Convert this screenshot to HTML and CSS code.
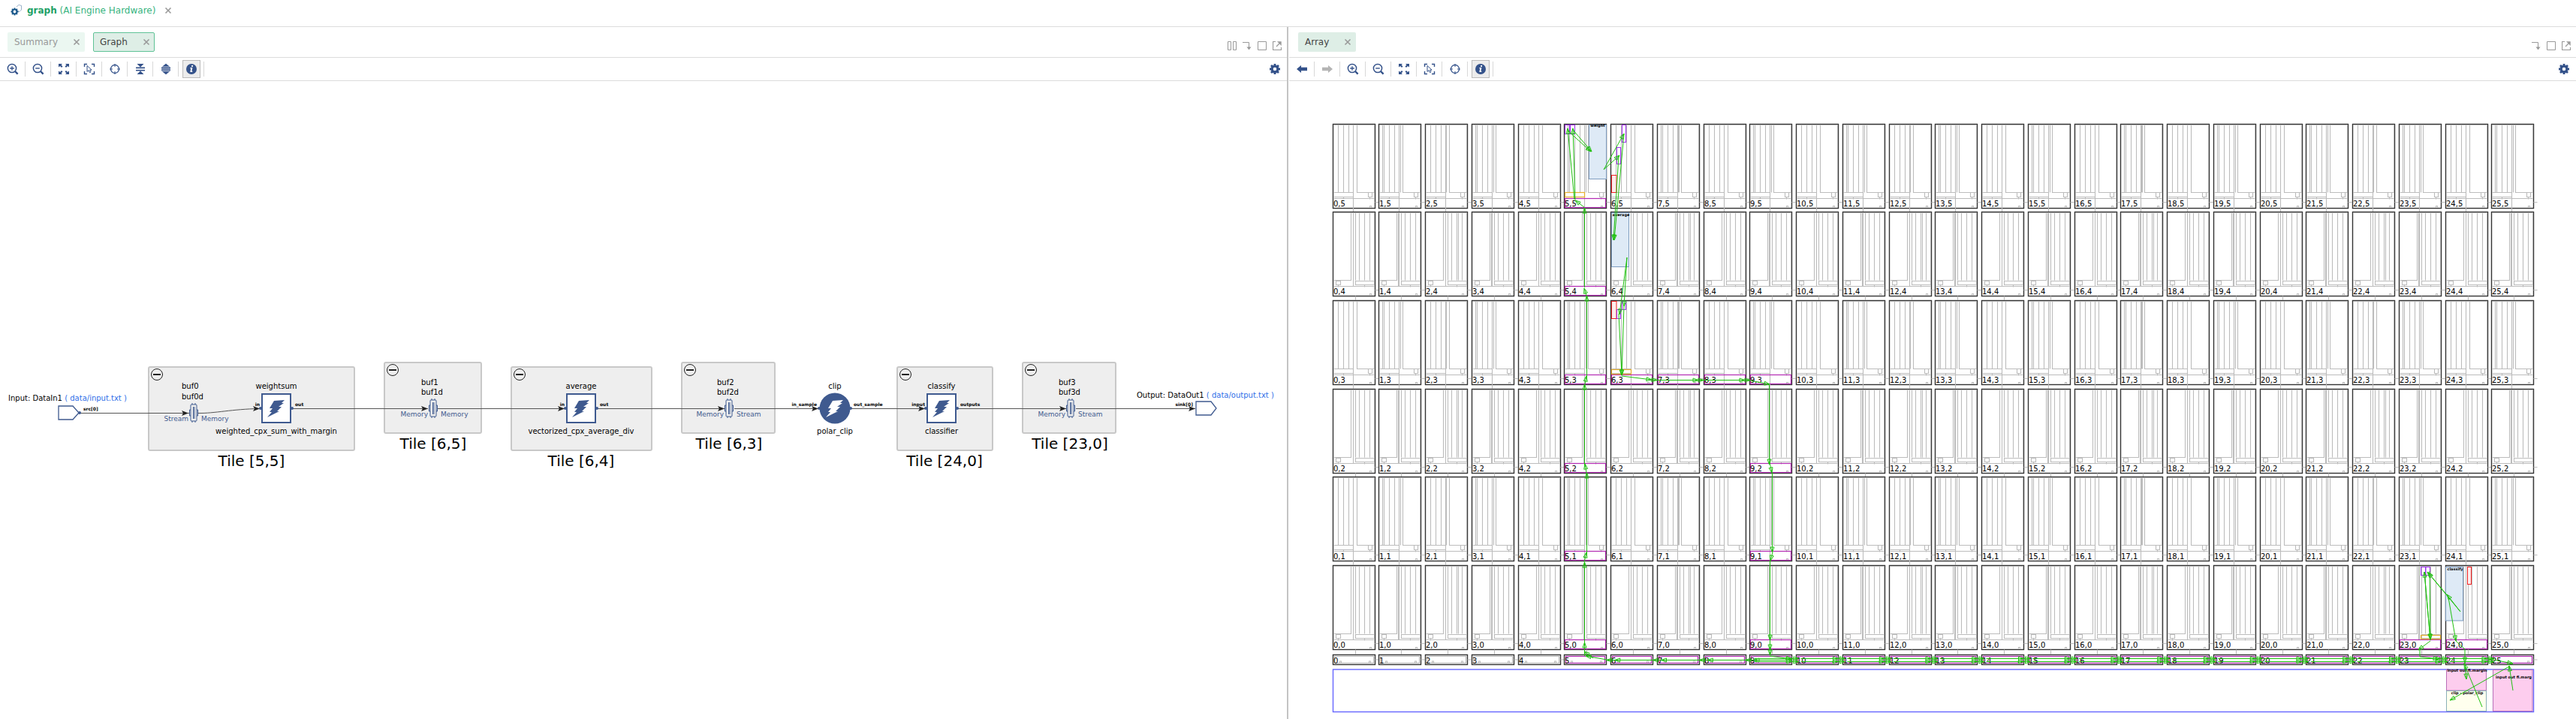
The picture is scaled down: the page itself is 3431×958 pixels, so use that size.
FILE: index.html
```html
<!DOCTYPE html>
<html lang="en">
<head>
<meta charset="utf-8">
<title>graph (AI Engine Hardware)</title>
<link rel="stylesheet" href="styles.css">
</head>
<body>
<svg class="sprite" aria-hidden="true">
  <symbol id="zoom-in" viewBox="0 0 16 16"><circle cx="7" cy="7" r="5.6" fill="none" stroke="currentColor" stroke-width="1.5"/><path d="M4.2 7h5.6M7 4.2v5.6" stroke="currentColor" stroke-width="1.3"/><path d="M11 11l3.6 3.6" stroke="currentColor" stroke-width="2.4"/></symbol>
  <symbol id="zoom-out" viewBox="0 0 16 16"><circle cx="7" cy="7" r="5.6" fill="none" stroke="currentColor" stroke-width="1.5"/><path d="M4.2 7h5.6" stroke="currentColor" stroke-width="1.4"/><path d="M11 11l3.6 3.6" stroke="currentColor" stroke-width="2.4"/></symbol>
  <symbol id="fit" viewBox="0 0 16 16"><path fill="currentColor" d="M1 1h5L4.500 2.500 6.500 4.500 5 6 3 4 1 5.500zM15 1h-5l1.500 1.500-2 2L11 6l2-2 2 1.500zM1 15h5l-1.500-1.500 2-2L5 10l-2 2-2-1.500zM15 15h-5l1.500-1.500-2-2L11 10l2 2 2-1.500z"/></symbol>
  <symbol id="fit-sel" viewBox="0 0 16 16"><g fill="none" stroke="currentColor"><path stroke-width="1.4" d="M1.500 5V1.500H5M11 1.500h3.500V5M14.500 11v3.500H11M5 14.500H1.500V11"/><path d="M5 3.500v8l2-1.800 1.500 3 1.500-.8-1.400-2.700h2.500z"/></g></symbol>
  <symbol id="target" viewBox="0 0 16 16"><circle cx="8" cy="8" r="5.500" fill="none" stroke="currentColor" stroke-width="1.300"/><path d="M8 1v4M8 11v4M1 8h4M11 8h4" stroke="currentColor"/></symbol>
  <symbol id="collapse" viewBox="0 0 16 16"><path fill="currentColor" d="M3.500 1h9L8 5.500zM3.500 15h9L8 10.500zM2 5.600h12v1.600H2zM2 8.900h12v1.600H2z"/></symbol>
  <symbol id="expand" viewBox="0 0 16 16"><path fill="currentColor" d="M3 4.700h10L8 .8zM3 11.300h10L8 15.200zM2 5.600h12v1.300H2zM2 7.500h12v1.200H2zM2 9.300h12v1.200H2z"/></symbol>
  <symbol id="info" viewBox="0 0 16 16"><circle cx="8" cy="8" r="7" fill="currentColor"/><path d="M8.300 3h1.900l-.4 1.900H7.900zM6.500 6h2.900l-1 4.800h1L9.200 12H6.300l.9-4.800h-.9z" fill="#fff"/></symbol>
  <symbol id="back" viewBox="0 0 16 16"><path fill="currentColor" d="M1 8l6-5v2.800h8v4.400H7V13z"/></symbol>
  <symbol id="forward" viewBox="0 0 16 16"><path fill="currentColor" d="M15 8L9 3v2.800H1v4.400h8V13z"/></symbol>
  <symbol id="gear" viewBox="0 0 16 16"><circle cx="8" cy="8" r="3.900" fill="none" stroke="currentColor" stroke-width="3.200"/><path d="M8 1v2.500M8 12.500V15M1 8h2.500M12.500 8H15M3 3l2 2M11 11l2 2M13 3l-2 2M5 11l-2 2" stroke="currentColor" stroke-width="2.800"/></symbol>
  <symbol id="split" viewBox="0 0 12 12"><path d="M.5.500h4v11h-4zM7.500.500h4v11h-4z" fill="none" stroke="currentColor"/></symbol>
  <symbol id="dock" viewBox="0 0 12 12"><path d="M0 1.500h8.500V8" fill="none" stroke="currentColor"/><path d="M5.500 7.500h6l-3 4z" fill="currentColor"/></symbol>
  <symbol id="square" viewBox="0 0 12 12"><path d="M.5.500h11v11H.5z" fill="none" stroke="currentColor"/></symbol>
  <symbol id="popout" viewBox="0 0 12 12"><path d="M4 .5H.5v11h11V8M5 7l4-4" fill="none" stroke="currentColor" stroke-width="1.200"/><path d="M6 .3h5.700V6z" fill="currentColor"/></symbol>
  <symbol id="close" viewBox="0 0 10 10"><path d="M1.500 1.500l7 7M8.500 1.500l-7 7" stroke="currentColor" stroke-width="1.600"/></symbol>
</svg>

<header class="titlebar">
  <svg class="app-icon" viewBox="0 0 16 16"><path d="M8 3l3-2.500 3.500 1V7L12 9.500 9 8.500" fill="#fff" stroke="#7f9dbb" stroke-width=".8"/><circle cx="5.500" cy="9.500" r="3" fill="none" stroke="#1d5a8c" stroke-width="2.200"/><path d="M5.500 4.500v2M5.500 12.500v2M.5 9.500h2M8.500 9.500h2M2 6l1.500 1.500M7.500 11.500L9 13M9 6L7.500 7.500M3.500 11.500L2 13" stroke="#1d5a8c" stroke-width="1.800"/></svg>
  <h1 class="title"><b>graph</b> (AI Engine Hardware)</h1>
  <button class="close" aria-label="Close graph"><svg><use href="#close"/></svg></button>
</header>

<main class="split">
  <section class="pane">
    <div class="tabbar">
      <div class="tab tab-idle"><button class="tab-name">Summary</button><button class="close" aria-label="Close Summary"><svg><use href="#close"/></svg></button></div>
      <div class="tab tab-active"><button class="tab-name">Graph</button><button class="close" aria-label="Close Graph"><svg><use href="#close"/></svg></button></div>
      <div class="window-tools">
        <button aria-label="Split"><svg><use href="#split"/></svg></button>
        <button aria-label="Dock"><svg><use href="#dock"/></svg></button>
        <button aria-label="Maximize"><svg><use href="#square"/></svg></button>
        <button aria-label="Float"><svg><use href="#popout"/></svg></button>
      </div>
    </div>
    <div class="toolbar">
      <button class="tool" aria-label="Zoom in"><svg><use href="#zoom-in"/></svg></button>
      <button class="tool" aria-label="Zoom out"><svg><use href="#zoom-out"/></svg></button>
      <button class="tool" aria-label="Zoom fit"><svg><use href="#fit"/></svg></button>
      <button class="tool" aria-label="Fit selection"><svg><use href="#fit-sel"/></svg></button>
      <button class="tool" aria-label="Autofit"><svg><use href="#target"/></svg></button>
      <button class="tool" aria-label="Collapse all"><svg><use href="#collapse"/></svg></button>
      <button class="tool" aria-label="Expand all"><svg><use href="#expand"/></svg></button>
      <button class="tool tool-on" aria-label="Information"><svg><use href="#info"/></svg></button>
      <button class="settings" aria-label="Settings"><svg><use href="#gear"/></svg></button>
    </div>
    <div class="canvas"><svg id="graph" viewBox="0 108 1714 850" preserveAspectRatio="xMinYMin"></svg></div>
  </section>
  <div class="divider"></div>
  <section class="pane">
    <div class="tabbar">
      <div class="tab tab-plain"><button class="tab-name">Array</button><button class="close" aria-label="Close Array"><svg><use href="#close"/></svg></button></div>
      <div class="window-tools">
        <button aria-label="Dock"><svg><use href="#dock"/></svg></button>
        <button aria-label="Maximize"><svg><use href="#square"/></svg></button>
        <button aria-label="Float"><svg><use href="#popout"/></svg></button>
      </div>
    </div>
    <div class="toolbar">
      <button class="tool" aria-label="Back"><svg><use href="#back"/></svg></button>
      <button class="tool" aria-label="Forward" disabled><svg><use href="#forward"/></svg></button>
      <button class="tool" aria-label="Zoom in"><svg><use href="#zoom-in"/></svg></button>
      <button class="tool" aria-label="Zoom out"><svg><use href="#zoom-out"/></svg></button>
      <button class="tool" aria-label="Zoom fit"><svg><use href="#fit"/></svg></button>
      <button class="tool" aria-label="Fit selection"><svg><use href="#fit-sel"/></svg></button>
      <button class="tool" aria-label="Autofit"><svg><use href="#target"/></svg></button>
      <button class="tool tool-on" aria-label="Information"><svg><use href="#info"/></svg></button>
      <button class="settings" aria-label="Settings"><svg><use href="#gear"/></svg></button>
    </div>
    <div class="canvas"><svg id="array" viewBox="1717 108 1714 850" preserveAspectRatio="xMinYMin"></svg></div>
  </section>
</main>
<script src="app.js"></script>
</body>
</html>
```

FILE: styles.css
```css
* { box-sizing: border-box; }
body {
  margin: 0;
  height: 100vh;
  display: flex;
  flex-direction: column;
  background: #fff;
  color: #444;
  font: 12px/16px "DejaVu Sans", sans-serif;
}
button {
  padding: 0;
  border: 0;
  background: none;
  color: inherit;
  font: inherit;
  display: flex;
  align-items: center;
  justify-content: center;
}
.sprite { position: absolute; width: 0; height: 0; }

.titlebar {
  height: 36px;
  padding: 0 14px 8px;
  display: flex;
  align-items: center;
  gap: 6px;
  border-bottom: 1px solid #dcdcdc;
}
.app-icon { width: 16px; height: 16px; }
.title { margin: 0; font-size: 12px; font-weight: 400; color: #36b37e; }
.title b { color: #22a066; }
.close { color: #999; }
.close svg { width: 10px; height: 10px; }
.titlebar .close { margin-left: 6px; }

.split { flex: 1; min-height: 0; display: grid; grid-template-columns: 1fr 3px 1fr; }
.pane { min-width: 0; min-height: 0; display: flex; flex-direction: column; }
.divider { border-left: 2px solid #c4c4c4; }

.tabbar {
  height: 41px;
  padding: 0 7px 0 10px;
  display: flex;
  align-items: center;
  gap: 11px;
  border-bottom: 1px solid #dcdcdc;
}
.tab {
  height: 26px;
  padding: 0 6px 0 9px;
  display: flex;
  align-items: center;
  justify-content: space-between;
  gap: 20px;
  border-radius: 2px;
}
.tab-idle { background: #ebf7f1; color: #999; }
.tab-active { background: #deeee6; border: 1px solid #5fc296; padding: 0 5px 0 8px; }
.tab-plain { background: #deeee6; margin-left: 2px; }
.window-tools {
  margin-left: auto;
  padding-top: 10px;
  display: flex;
  gap: 8px;
  color: #999;
}
.window-tools svg { width: 12px; height: 12px; }

.toolbar {
  height: 31px;
  padding: 0 8px 0 0;
  display: flex;
  align-items: center;
  border-bottom: 1px solid #dcdcdc;
}
.tool {
  width: 34px;
  height: 20px;
  border-right: 1px solid #d8d8d8;
  color: #34528a;
}
.tool:disabled { color: #b4b4b4; }
.tool svg, .settings svg { width: 16px; height: 16px; }
.tool-on svg {
  width: 24px;
  height: 24px;
  padding: 3px;
  border: 1px solid #bbb;
  background: #ececec;
}
.settings { margin-left: auto; color: #34528a; }

.canvas { flex: 1; min-height: 0; }
.canvas svg { display: block; width: 100%; height: 100%; }
.canvas text { font-family: "DejaVu Sans", sans-serif; font-size: 10px; fill: #000; }
.canvas .tile-name { font-size: 20px; }
.canvas .side { font-size: 9px; fill: #3f5a8f; }
.canvas .pin { font-size: 6px; font-weight: 700; }
.canvas .tag { font-size: 5px; font-weight: 700; }
.canvas .file { fill: #2f6fe8; }
.mid { text-anchor: middle; }
.end { text-anchor: end; }

.group { fill: #eee; stroke: #c8c8c8; stroke-width: 2; }
.minus { fill: none; stroke: #222; stroke-width: 1; }
.bar { stroke: #222; stroke-width: 2; }
.wire { fill: none; stroke: #555; stroke-width: 1; }
.head { fill: #222; }
.outline { fill: #fff; stroke: #3f5a8f; stroke-width: 2; }
.thin { fill: none; stroke: #3f5a8f; stroke-width: 1; }
.port { fill: #fff; stroke: #3f5a8f; stroke-width: 1.3; }
.solid { fill: #3f5a8f; }
.white { fill: #fff; }

.cell { fill: #fff; stroke: #333; stroke-width: 1.4; }
.detail { fill: none; stroke: #bcbcbc; stroke-width: 1.1; }
.used { fill: none; stroke: #b32ab3; stroke-width: 1.2; }
.buffer { fill: none; stroke: #a030f0; stroke-width: 1; }
.kernel { fill: #deeaf6; stroke: #7f9dc0; stroke-width: 1; }
.stack { fill: #ffecec; stroke: #f02020; stroke-width: 1; }
.dma { fill: none; stroke: #e8b030; stroke-width: 1.2; }
.fabric { fill: none; stroke: #6666ff; stroke-width: 1.4; }
.io { fill: #fdcdee; stroke: #b870b8; stroke-width: 1; }
.pl { fill: #ffffee; stroke: #8ab0b8; stroke-width: 1; }
.net { fill: none; stroke: #20c010; stroke-width: 1; }
```

FILE: app.js
```js
const rect = (c, x1, y1, x2, y2, r = 0) =>
  `<rect class="${c}" x="${x1}" y="${y1}" width="${x2 - x1}" height="${y2 - y1}" rx="${r}"/>`;
const text = (c, x, y, s) => `<text class="${c}" x="${x}" y="${y}">${s}</text>`;
const path = (c, d) => `<path class="${c}" d="${d}"/>`;

/* ---------- dataflow graph ---------- */
const Y = 544;
const bolt = (c, x, y) =>
  path(c, `M${x + 11} ${y - 11}L${x - 3} ${y - 10}L${x - 9} ${y}L${x - 5} ${y}L${x - 9} ${y + 5}L${x - 6} ${y + 5}L${x - 12} ${y + 12}L${x + 4} ${y + 4}L${x + 1} ${y + 4}L${x + 7} ${y - 2}L${x + 3} ${y - 2}L${x + 10} ${y - 7}L${x + 7} ${y - 7}Z`);
const head = (x, y) => path("head", `M${x} ${y}l-9 -3.500l2 3.500l-2 3.500z`);
const group = (x1, x2, tall, name, cx) => {
  const top = tall ? 489 : 483, bottom = tall ? 600 : 577;
  return rect("group", x1, top, x2, bottom, 2) +
    `<circle class="minus" cx="${x1 + 11}" cy="${top + 10}" r="7.500"/>` +
    path("bar", `M${x1 + 6} ${top + 10}h10`) +
    text("tile-name mid", cx, bottom + 21, name);
};
const buffer = (x, y, n, left, right, gap) =>
  text("", x - 16, y - 18 - gap, "buf" + n) + text("", x - 16, y - 18, `buf${n}d`) +
  `<rect class="thin" x="${x - 4}" y="${y - 11}" width="8" height="22" rx="1"/>` +
  path("thin", `M${x - .5} ${y - 8}v16M${x + 1} ${y - 8}v16M${x - 2} ${y - 11}v-2M${x + 2} ${y - 11}v-2M${x - 2} ${y + 11}v2M${x + 2} ${y + 11}v2M${x - 4} ${y - 4}h-1.500v8h1.500M${x + 4} ${y - 4}h1.500v8h-1.500`) +
  text("side end", x - 7, y + 11, left) + text("side", x + 10, y + 11, right);
const pins = x => `<circle class="solid" cx="${x - 21}" cy="${Y}" r="2"/><circle class="solid" cx="${x + 21}" cy="${Y}" r="2"/>`;
const kernel = (x, name, fn, pin1, pin2) =>
  rect("outline", x - 19, Y - 19, x + 19, Y + 19) + bolt("solid", x, Y) + pins(x) +
  text("mid", x, 518, name) + text("mid", x, 578, fn) +
  text("pin end", x - 22, 541, pin1) + text("pin", x + 25, 541, pin2);

let g = "";
g += group(198, 472, true, "Tile [5,5]", 335) + group(512, 641, false, "Tile [6,5]", 577) +
  group(681, 868, true, "Tile [6,4]", 774) + group(908, 1032, false, "Tile [6,3]", 971) +
  group(1195, 1322, true, "Tile [24,0]", 1258) + group(1362, 1486, false, "Tile [23,0]", 1425);
g += path("wire", `M106 550.5H252M264 550.5C285 551 310 545 345 544.5M388 544.5H570M583 544.5H752M795 544.5H965M978 544.5H1090M1133 544.5H1232M1275 544.5H1420M1433 544.5H1592`);
g += path("port", "M78 541h19l8 9l-8 9h-19z") + `<circle class="solid" cx="106" cy="550" r="2"/>`;
g += path("port", "M1593 535h20l7 9l-7 9h-20z");
g += `<text x="11" y="534">Input: DataIn1 <tspan class="file">( data/input.txt )</tspan></text>`;
g += `<text x="1514" y="530">Output: DataOut1 <tspan class="file">( data/output.txt )</tspan></text>`;
g += text("pin", 111, 547, "src[0]") + text("pin end", 1589, 541, "sink[0]");
g += buffer(258, 550, 0, "Stream", "Memory", 14) + buffer(577, Y, 1, "Memory", "Memory", 13) +
  buffer(971, Y, 2, "Memory", "Stream", 13) + buffer(1426, Y, 3, "Memory", "Stream", 13);
g += kernel(368, "weightsum", "weighted_cpx_sum_with_margin", "in", "out");
g += kernel(774, "average", "vectorized_cpx_average_div", "in", "out");
g += `<circle class="solid" cx="1112" cy="${Y}" r="20.500"/>` + bolt("white", 1112, Y) + pins(1112) +
  text("mid", 1112, 518, "clip") + text("mid", 1112, 578, "polar_clip") +
  text("pin end", 1088, 541, "in_sample") + text("pin", 1137, 541, "out_sample");
g += kernel(1254, "classify", "classifier", "input", "outputs");
g += head(251, 550.5) + [346, 570, 752, 965, 1090, 1232, 1420, 1592].map(x => head(x, 544.5)).join("");
document.getElementById("graph").innerHTML = g;

/* ---------- tile array ---------- */
const colX = c => 1775 + c * 61.75;
const rowY = r => 753.5 - r * 117.7;
const used = new Set(["5,5", "5,4", "5,3", "5,2", "5,1", "5,0", "6,3", "7,3", "8,3", "9,3", "9,2", "9,1", "9,0", "23,0", "24,0"]);
let a = "", labels = "";
for (let r = 5; r >= 0; r--) for (let c = 0; c < 26; c++) {
  const x = Math.floor(colX(c)) + .5, y = Math.floor(rowY(r)) + .5, odd = r % 2 === 1;
  a += rect("cell", x, y, x + 56, y + 112);
  let d = odd
    ? "M7 1v90M14 1v90M21 1v90M27 1v90M32 1v90h23v-90M1 91h26v6h-26M47 91h5v6h-5zM14 97v3M49 97v3"
    : "M24 1v90h-23M27 1v98M30 91v-90M35 1v90M42 1v90M49 1v90M55 1v90M30 92h25v5h-25zM4 92h6v5h-6zM7 97v3M42 97v3";
  if (c % 2) d += odd ? "M5 1v90M29 1v90" : "M26 1v98";
  if (c % 5 === 2) d += odd ? "M28 1v90" : "M44 1v90";
  d += "M1 1h54M1 99h54M49 111v-2h2v2M56 104h5";
  d += r ? (odd ? "M27 97v20" : "M30 112v5") : "M30 112v6";
  a += `<g transform="translate(${x} ${y})">${path("detail", d)}</g>`;
  if (used.has(`${c},${r}`)) a += rect("used", x + 1, y + 99, x + 55, y + 111);
  labels += text("", x + .5, y + 109.5, `${c},${r}`);
}
for (let c = 0; c < 26; c++) {
  const x = Math.floor(colX(c)) + .5;
  a += rect("cell", x, 872.5, x + 56, 885.5) + rect(c > 4 ? "used" : "detail", x + 2, 874.5, x + 54, 883.5) +
    path("detail", `M${x + 9} 883v-2h2v2M${x + 48} 883v-2h2v2M${x + 56} 879h5`);
  labels += text("", x + .5, 884, c);
}
a += rect("fabric", 1775.5, 892, 3374.5, 948.5);

a += rect("kernel", 2116.5, 166.5, 2139.5, 238.5) + rect("kernel", 2146.5, 283.5, 2169.5, 355.5) + rect("kernel", 3257.5, 755.5, 3280.5, 827);
a += rect("stack", 2146.5, 233.5, 2153, 256.5) + rect("stack", 2146.5, 401.5, 2153, 424.5) + rect("stack", 3286.5, 755.5, 3291.5, 778.5);
a += [[2084.5, 166.5, 2090.5, 178.5], [2091.5, 166.5, 2097.5, 178.5], [2160.5, 166.5, 2165.5, 189.5], [2153.5, 196.5, 2158.5, 218.5],
  [2153.5, 412.5, 2158.5, 424.5], [2160.5, 401.5, 2165.5, 412.5], [3224.5, 755.5, 3230.5, 766.5], [3231, 755.5, 3236.5, 766.5]].map(b => rect("buffer", ...b)).join("");
a += rect("dma", 2084.5, 256.5, 2110.5, 262.5) + rect("dma", 2146.5, 492.5, 2172.5, 498.5) + rect("dma", 3224.5, 846.5, 3250.5, 851.5);
a += rect("io", 3258.5, 892.5, 3311.5, 920) + rect("pl", 3258.5, 920.5, 3311.5, 947.5) + rect("io", 3320.5, 892.5, 3373, 947.5);
labels += text("tag mid", 2128, 169, "weight") + text("tag mid", 2159, 288, "average") + text("tag mid", 3270, 760, "classify") +
  text("tag mid", 3286, 895, "input out fi.margin") + text("tag mid", 3286, 925, "clip - polar_clip") + text("tag mid", 3348, 904, "input out fi.marg");

/* Each route is a polyline whose last point carries an open arrowhead. */
const arrow = pts => {
  const [[x0, y0], [x, y]] = pts.slice(-2);
  const t = Math.atan2(y - y0, x - x0), p = (l, w) =>
    `${(x - l * Math.cos(t) + w * Math.sin(t)).toFixed(1)} ${(y - l * Math.sin(t) - w * Math.cos(t)).toFixed(1)}`;
  return path("net", "M" + pts.map(q => q.join(" ")).join("L") + `M${p(0, 0)}L${p(7, 2.5)}L${p(7, -2.5)}Z`);
};
const routes = [
  [[2097, 266], [2088, 171]], [[2098, 266], [2095, 171]], [[2088, 174], [2119, 202]], [[2094, 172], [2120, 202]],
  [[2110.5, 383], [2110.5, 277]], [[2110, 276], [2098, 267]],
  [[2136, 226], [2163, 178]], [[2136, 226], [2157, 207]], [[2163, 178], [2150, 320]], [[2156, 207], [2149, 320]],
  [[2167, 343], [2163, 408]], [[2167, 343], [2157, 419]], [[2156, 418], [2160, 500]], [[2163, 407], [2160, 500]],
  [[2113.5, 503], [2113.5, 394]], [[2113, 394], [2110, 384]], [[2110.5, 620], [2110.5, 512]], [[2111, 512], [2113, 501]],
  [[2113.5, 740], [2113.5, 630]], [[2113, 630], [2111, 618]], [[2110.5, 858], [2110.5, 749]], [[2110, 749], [2113, 736]],
  [[2110.5, 874], [2110.5, 856]], [[2122, 877], [2110, 868]], [[2140, 879], [2112, 874]],
  [[2160, 501], [2200, 506]], [[2200, 506], [2207, 506.5]], [[2207, 506.5], [2262, 506.5]], [[2262, 506.5], [2269, 506.5]],
  [[2269, 506.5], [2324, 506.5]], [[2324, 506.5], [2331, 506.5]], [[2331, 507], [2357, 512]], [[2356.5, 512], [2356.5, 619]],
  [[2357, 616], [2360, 630]], [[2360.5, 630], [2360.5, 736]], [[2361, 736], [2358, 747]], [[2357.5, 747], [2357.5, 853]],
  [[2357.5, 853], [2357.5, 866]], [[2357.5, 866], [2357.5, 873]], [[2357, 874], [2386, 878]],
  [[3237, 853], [3229, 762]], [[3236, 761], [3237, 852]], [[3229, 762], [3237, 852]],
  [[3277, 815], [3233, 762]], [[3261, 795], [3234, 763]], [[3277, 815], [3259, 792]], [[3261, 796], [3271, 854]],
  [[3271, 854], [3283, 865], [3283, 883]], [[3237, 854], [3221, 866]], [[3223, 862], [3223, 875], [3248, 878]],
  [[3283, 883], [3285, 905]], [[3306, 942], [3282, 884]], [[3342, 888], [3263, 933]], [[3347, 920], [3342, 887]], [[3310, 877], [3347, 884]]
];
for (let c = 5; c < 9; c++) {
  const x = colX(c) + 57;
  routes.push([[x + 61, 879.5], [x + 10, 879.5]], [[x + 10, 879.5], [x - 1, 879.5]]);
}
for (let c = 9; c < 25; c++) {
  const x = colX(c) + 57;
  for (const y of [877.5, 881.5]) routes.push([[x - 51, y], [x - 1, y]], [[x - 1, y], [x + 8, y]]);
}
a += labels + routes.map(arrow).join("");
document.getElementById("array").innerHTML = a;
```
